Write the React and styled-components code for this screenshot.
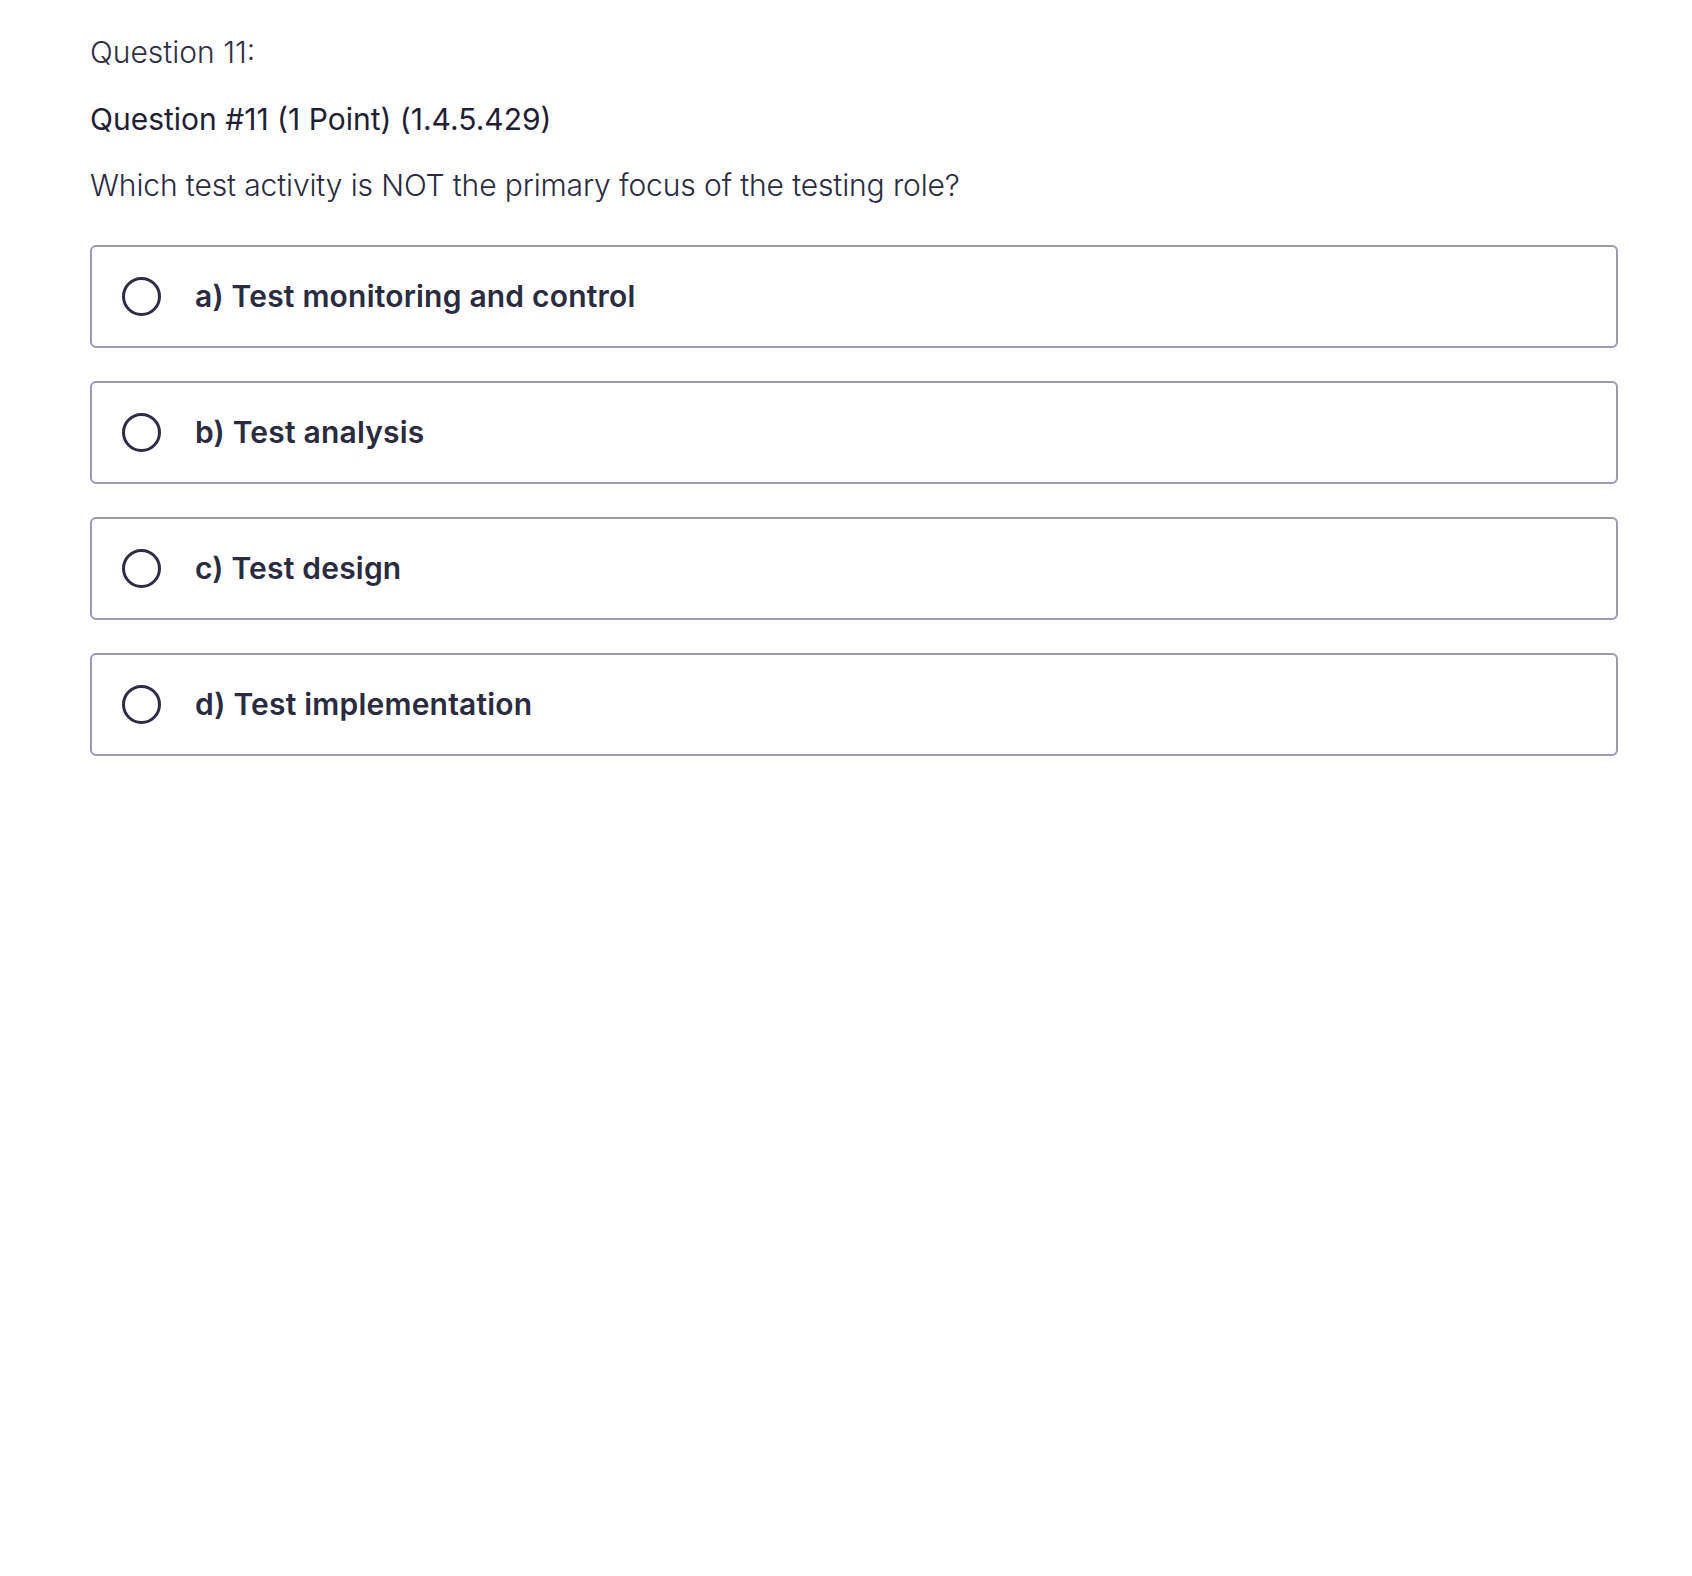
import React, { useState } from 'react'
import styled, { createGlobalStyle } from 'styled-components'

const GlobalStyle = createGlobalStyle`
    html, body {
        margin: 0;
        padding: 0;
        background: #ffffff;
    }
    body {
        font-family: Inter, Roboto, "Liberation Sans", Arial, sans-serif;
        color: #2a2b3f;
    }
`

const Page = styled.div`
    display: flex;
    flex-direction: column;
    padding: 32px 74px 0 90px;
    min-height: 1576px;
    box-sizing: border-box;
`

const Heading = styled.div`
    font-size: 30px;
    line-height: 40px;
    font-weight: 300;
    color: #2d2f45;
`

const SubHeading = styled.div`
    font-size: 30px;
    line-height: 40px;
    font-weight: 400;
    color: #1f2035;
    margin-top: 27px;
`

const Prompt = styled.div`
    font-size: 30px;
    line-height: 40px;
    font-weight: 300;
    color: #2a2b40;
    margin-top: 26px;
    letter-spacing: -0.12px;
`

const OptionList = styled.div`
    display: flex;
    flex-direction: column;
    gap: 33px;
    margin-top: 40px;
`

const OptionBox = styled.label`
    display: flex;
    align-items: center;
    gap: 34px;
    height: 103px;
    box-sizing: border-box;
    padding: 0 30px;
    border: 2px solid ${({ $checked }) => ($checked ? '#2a2b40' : '#9a9bb0')};
    border-radius: 6px;
    cursor: pointer;
`

const Radio = styled.span`
    flex: none;
    width: 39px;
    height: 39px;
    box-sizing: border-box;
    border-radius: 50%;
    border: 3.5px solid #2c2d44;
    display: flex;
    align-items: center;
    justify-content: center;
    &::after {
        content: '';
        display: ${({ $checked }) => ($checked ? 'block' : 'none')};
        width: 19px;
        height: 19px;
        border-radius: 50%;
        background: #2c2d44;
    }
`

const OptionText = styled.span`
    font-size: 30px;
    font-weight: 600;
    color: #2a2b3f;
    letter-spacing: 0.2px;
    margin-top: -2px;
`

const options = [
    'a) Test monitoring and control',
    'b) Test analysis',
    'c) Test design',
    'd) Test implementation',
]

const App = () => {
    const [selected, setSelected] = useState(null)

    return (
        <>
            <GlobalStyle />
            <Page>
                <Heading>Question 11:</Heading>
                <SubHeading>Question #11 (1 Point) (1.4.5.429)</SubHeading>
                <Prompt>Which test activity is NOT the primary focus of the testing role?</Prompt>
                <OptionList>
                    {options.map((opt, i) => (
                        <OptionBox key={opt} $checked={selected === i} onClick={() => setSelected(i)}>
                            <Radio $checked={selected === i} />
                            <OptionText>{opt}</OptionText>
                        </OptionBox>
                    ))}
                </OptionList>
            </Page>
        </>
    )
}

export default App
